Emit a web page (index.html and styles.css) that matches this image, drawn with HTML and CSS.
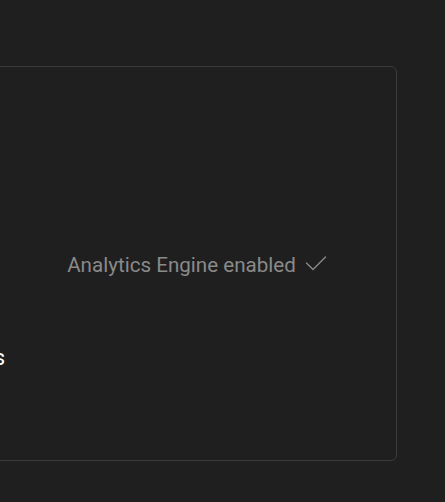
FILE: index.html
```html
<!DOCTYPE html>
<html lang="en">
<head>
<meta charset="utf-8">
<link rel="stylesheet" href="styles.css">
</head>
<body>
<div class="page">
  <section class="card">
    <div class="side">
      <span class="label">Requests</span>
    </div>
    <div class="main">
      <p class="status">Analytics Engine enabled
        <svg class="check" width="22" height="16" viewBox="0 0 22 16" aria-hidden="true">
          <polyline points="1.5,7 8,13.5 20.5,1" fill="none" stroke="#8a8a8a" stroke-width="1.4" stroke-linecap="round" stroke-linejoin="round"/>
        </svg>
      </p>
    </div>
  </section>
</div>
</body>
</html>
```
FILE: styles.css
```css
html, body {
  margin: 0;
  padding: 0;
  background: #1f1f1f;
  height: 100%;
  overflow: hidden;
}
body {
  font-family: Roboto, "Liberation Sans", sans-serif;
}
.page {
  padding-top: 66px;
}
.card {
  box-sizing: border-box;
  margin-left: -200px;
  width: 597px;
  height: 395px;
  border: 1px solid #3b3b3b;
  border-radius: 6px;
  display: grid;
  grid-template-columns: 204px 1fr;
}
.side {
  display: flex;
  justify-content: flex-end;
  padding-top: 276px;
}
.label {
  color: #ffffff;
  font-size: 22px;
  line-height: 30px;
  height: 30px;
}
.main {
  display: flex;
  align-items: center;
  justify-content: center;
  padding-right: 7px;
  padding-top: 2px;
}
.status {
  margin: 0;
  color: #8a8a8a;
  font-size: 20.6px;
  line-height: 28px;
  display: flex;
  align-items: center;
  gap: 9px;
}
.check {
  display: block;
  margin-top: -2px;
}
```
